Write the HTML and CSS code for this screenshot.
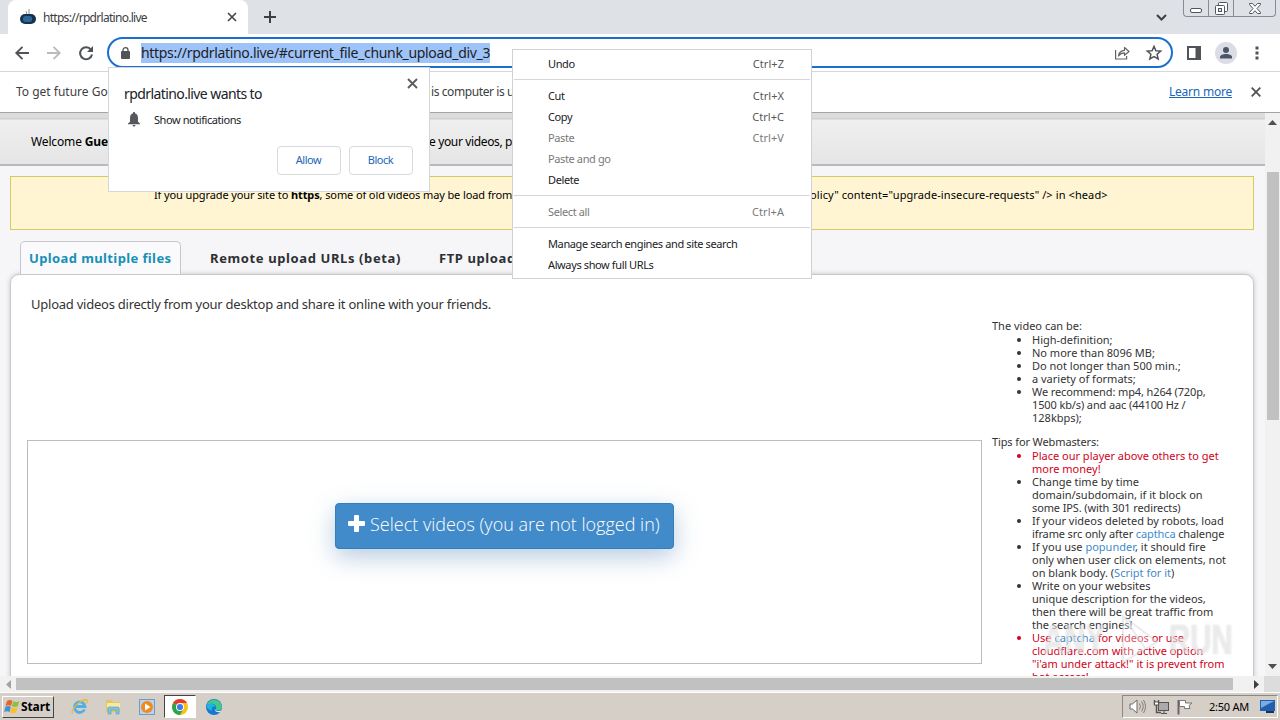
FILE: index.html
```
<!DOCTYPE html>
<html lang="en">
<head>
<meta charset="utf-8">
<title>https://rpdrlatino.live</title>
<link rel="stylesheet" href="styles.css">
</head>
<body>
<div class="tabstrip">
  <div class="tab">
    <svg class="favicon" width="18" height="18" viewBox="0 0 18 18"><path d="M8 7 7 3M10 7V1" stroke="#8a9096" fill="none"/><rect x="1" y="6" width="16" height="10" rx="5" fill="#17324e"/><rect x="4" y="8" width="9" height="6" rx="2.5" fill="#2d6796"/></svg>
    <span class="tab-title">https://rpdrlatino.live</span>
    <svg class="tab-close" width="10" height="10" viewBox="0 0 10 10"><path d="M1 1l8 8M9 1 1 9" stroke="#45494d" stroke-width="1.7"/></svg>
  </div>
  <svg class="newtab" width="12" height="12" viewBox="0 0 12 12"><path d="M6 0v12M0 6h12" stroke="#3c4043" stroke-width="2"/></svg>
  <svg class="chevron" width="11" height="7" viewBox="0 0 11 7"><path d="M1 1l4.500 4.500L10 1" fill="none" stroke="#3c4043" stroke-width="2"/></svg>
  <div class="winctl">
    <span class="wc wc-min"><svg width="12" height="5" viewBox="0 0 12 5"><rect x=".5" y=".5" width="11" height="4" rx="1.500" fill="#fff" stroke="#53565c"/></svg></span>
    <span class="wc wc-max"><svg width="13" height="13" viewBox="0 0 13 13"><rect x="3.500" y=".5" width="9" height="9" rx="1" fill="#fff" stroke="#53565c"/><rect x=".5" y="3.500" width="9" height="9" rx="1" fill="#fff" stroke="#53565c"/><rect x="3.500" y="6.500" width="3" height="3" fill="#dee1e6" stroke="#53565c"/></svg></span>
    <span class="wc wc-close"><svg width="12" height="11" viewBox="0 0 12 11"><path d="M.5.5h3L6 3.300 8.500.5h3v1L8 5.500l3.500 4v1h-3L6 7.700 3.500 10.500h-3v-1L4 5.500.5 1.500z" fill="#fff" stroke="#53565c"/></svg></span>
  </div>
</div>
<div class="toolbar">
  <svg width="14" height="14" viewBox="0 0 14 14"><path d="M14 7H1.500M7.500.8 1.300 7l6.200 6.200" fill="none" stroke="#505357" stroke-width="1.900"/></svg>
  <svg width="14" height="14" viewBox="0 0 14 14"><path d="M0 7h12.500M6.500.8 12.700 7l-6.200 6.200" fill="none" stroke="#babcbe" stroke-width="1.900"/></svg>
  <svg width="14" height="14" viewBox="0 0 14 14"><path d="M12 3.800A6 6 0 1 0 13 8.500" fill="none" stroke="#505357" stroke-width="2"/><path d="M14 0v6H8z" fill="#505357"/></svg>
  <div class="omnibox">
    <svg class="lock" width="9" height="12" viewBox="0 0 9 12"><rect y="4" width="9" height="8" rx="1" fill="#505357"/><path d="M2 5V3a2.500 2.300 0 0 1 5 0v2" fill="none" stroke="#505357" stroke-width="1.300"/></svg>
    <span class="url">https://rpdrlatino.live/#current_file_chunk_upload_div_3</span>
    <svg class="share" width="15" height="14" viewBox="0 0 15 14"><path d="M.6 4v9h11V10" fill="none" stroke="#606468" stroke-width="1.200"/><path d="M3.500 10C4 6 6 4.500 9.500 4.300V1.500L14 5.500 9.500 9.300V6.800C7 6.800 5 7.800 3.500 10z" fill="none" stroke="#606468" stroke-width="1.200" stroke-linejoin="round"/></svg>
    <svg class="star" width="16" height="15" viewBox="0 0 16 15"><path d="M8 1.300l1.900 4.400 4.800.4-3.600 3.200 1.100 4.700L8 11.500 3.800 14l1.100-4.700L1.300 6.100l4.800-.4z" fill="none" stroke="#505357" stroke-width="1.500"/></svg>
  </div>
  <svg class="side" width="14" height="14" viewBox="0 0 14 14"><path d="M0 0h14v14H0zM2 2v10h6.500V2z" fill="#505357" fill-rule="evenodd"/></svg>
  <svg class="avatar" width="22" height="22" viewBox="0 0 22 22"><circle cx="11" cy="11" r="11" fill="#dadde3"/><circle cx="11" cy="8" r="3" fill="#4b546b"/><path d="M5 16.500v-1.500c0-2 3-3 6-3s6 1 6 3v1.500z" fill="#4b546b"/></svg>
  <svg class="dots" width="4" height="14" viewBox="0 0 4 14"><path d="M.5.500h3v3h-3zM.500 5.500h3v3h-3zM.5 10.500h3v3h-3z" fill="#505357"/></svg>
</div>
<div class="infobar">
  <span class="info-a">To get future Go</span>
  <span class="info-b">is computer is u</span>
  <a class="learn">Learn more</a>
  <svg class="info-x" width="10" height="10" viewBox="0 0 10 10"><path d="M.7.7l8.600 8.600M9.300.7.7 9.300" stroke="#505357" stroke-width="1.800"/></svg>
</div>
<div class="viewport">
  <div class="page">
    <div class="welcome"><span class="wel-a">Welcome <b>Gue</b></span><span class="wel-b">e your videos, p</span></div>
    <div class="notice"><span class="not-a">If you upgrade your site to <b>https</b>, some of old videos may be load from</span><span class="not-b">olicy" content="upgrade-insecure-requests" /&gt; in &lt;head&gt;</span></div>
    <div class="tabs">
      <span class="ptab active">Upload multiple files</span>
      <span class="ptab">Remote upload URLs (beta)</span>
      <span class="ptab">FTP upload</span>
    </div>
    <div class="panel">
      <div class="main-col">
        <p class="lead">Upload videos directly from your desktop and share it online with your friends.</p>
        <div class="dropzone">
          <div class="select-btn"><svg width="17" height="17" viewBox="0 0 17 17"><path d="M6 1q0-1 1-1h3q1 0 1 1v5h5q1 0 1 1v3q0 1-1 1h-5v5q0 1-1 1H7q-1 0-1-1v-5H1q-1 0-1-1V7q0-1 1-1h5z" fill="#fff"/></svg><span>Select videos (you are not logged in)</span></div>
        </div>
      </div>
      <div class="tips">
        <h4>The video can be:</h4>
        <ul>
          <li>High-definition;</li>
          <li>No more than 8096 MB;</li>
          <li>Do not longer than 500 min.;</li>
          <li>a variety of formats;</li>
          <li><span class="snug">We recommend: mp4, h264 (720p,</span><br><span class="snug">1500 kb/s) and aac (44100 Hz /</span><br>128kbps);</li>
        </ul>
        <h4 class="snug">Tips for Webmasters:</h4>
        <ul>
          <li class="red">Place our player above others to get<br>more money!</li>
          <li>Change time by time<br>domain/subdomain, if it block on<br><span class="snug">some IPS. (with 301 redirects)</span></li>
          <li>If your videos deleted by robots, load<br><span class="snug">iframe src only after <a>capthca</a> chalenge</span></li>
          <li>If you use <a>popunder</a>, it should fire<br>only when user click on elements, not<br>on blank body. (<a>Script for it</a>)</li>
          <li>Write on your websites<br>unique description for the videos,<br>then there will be great traffic from<br>the search engines!</li>
          <li class="red">Use <a>captcha</a> for videos or use<br>cloudflare.com with active option<br>"i'am under attack!" it is prevent from<br>bot access!</li>
        </ul>
      </div>
    </div>
  </div>
  <div class="vscroll"><svg class="up" width="9" height="5" viewBox="0 0 9 5"><path d="M0 5 4.500 0 9 5z" fill="#505050"/></svg><div class="vthumb"></div><svg class="down" width="9" height="5" viewBox="0 0 9 5"><path d="M0 0l4.500 5L9 0z" fill="#505050"/></svg></div>
</div>
<div class="hscroll"><svg width="5" height="9" viewBox="0 0 5 9"><path d="M5 0 0 4.500 5 9z" fill="#a3a3a3"/></svg><div class="hthumb"></div><svg class="right" width="5" height="9" viewBox="0 0 5 9"><path d="M0 0l5 4.500L0 9z" fill="#404040"/></svg><div class="corner"></div></div>
<div class="taskbar">
  <div class="start"><svg width="15" height="15" viewBox="0 0 15 15"><path d="M2 2q3-2 5.500 0L6 7Q3.500 5.500.5 7z" fill="#e8642c"/><path d="M8.300 2.300q3 1.500 6 0L12.800 7.300q-3 1.500-6 0z" fill="#8cc043"/><path d="M.3 8q3-1.800 5.500 0L4.500 13Q2 11.500-.8 13z" fill="#3f8fdb"/><path d="M6.600 8.300q3 1.500 6 0L11 13.500q-3 1.500-6 0z" fill="#fbc02d"/></svg><span>Start</span></div>
  <div class="ql ql-ie"><svg width="17" height="17" viewBox="0 0 17 17"><path d="M13.500 11.500A5.300 5.300 0 1 1 14 8.500H4.500" fill="none" stroke="#4db1e8" stroke-width="2.800"/><path d="M1.500 15.500C-1 12 9 2 15.500 1.500c1.500.5.500 3-.5 4" fill="none" stroke="#e9b83a" stroke-width="1.300"/></svg></div>
  <div class="ql ql-ex"><svg width="17" height="16" viewBox="0 0 17 16"><path d="M1 1h6l1 2h7v10H1z" fill="#e3c565"/><path d="M2 4h13v5H2z" fill="#f7eaa6"/><path d="M3 15V9q0-1 1-1h9q1 0 1 1v6h-3v-4H6v4z" fill="#7fc4dd" stroke="#4e9fc0" stroke-width=".6"/></svg></div>
  <div class="ql ql-mp"><svg width="16" height="16" viewBox="0 0 16 16"><rect x=".5" y=".5" width="15" height="15" fill="#b9d3ee" stroke="#6d9cc9"/><circle cx="8" cy="8" r="6" fill="#f08a1d"/><path d="M6 4.500v7L11.500 8z" fill="#fff"/></svg></div>
  <div class="ql ql-cr"><svg width="16" height="16" viewBox="0 0 16 16"><circle cx="8" cy="8" r="8" fill="#fbc116"/><path d="M8 8 1.100 4A8 8 0 0 1 14.900 4z" fill="#e33b2e"/><path d="M8 8 1.100 4A8 8 0 0 0 8 16l3.500-6z" fill="#2da44e"/><path d="M8 4h6.900L11.500 10z" fill="#fbc116"/><circle cx="8" cy="8" r="4" fill="#fff"/><circle cx="8" cy="8" r="3.100" fill="#3b7de9"/></svg></div>
  <div class="ql ql-ed"><svg width="16" height="16" viewBox="0 0 16 16"><circle cx="8" cy="8" r="8" fill="#1478cf"/><path d="M.5 6A8 8 0 0 1 16 8c0 2.500-2 3.500-4 3.500s-3-.7-2-2C11 6 7 3 .5 6z" fill="#43c989"/><path d="M.3 7C3 3.500 9 4.500 9.500 8 7 6.500 5 9 6 12c-3-1-5-3-5.700-5z" fill="#1db4dd"/><path d="M9.500 8c-1.500 2 0 4 3 4 1.500 0 2.500-.5 3-1-.3.800-.7 1.300-1.200 1.900C10 14 7.500 11 9.500 8z" fill="#e6f1f5"/></svg></div>
  <div class="tray">
    <svg class="spk" width="17" height="15" viewBox="0 0 17 15"><path d="M1 5h2.500L8 1v13L3.500 10H1z" fill="#fff" stroke="#6b6b6b"/><path d="M10.500 4.500q2 3 0 6M12.500 2.500q3.500 5 0 10M14.500 1q4 6.500 0 13" fill="none" stroke="#7c7c7c"/></svg>
    <svg class="net" width="16" height="16" viewBox="0 0 16 16"><rect x="5.500" y="3.500" width="10" height="8" fill="#aaa" stroke="#555"/><path d="M8 14.500h6M11 12v2" stroke="#555"/><path d="M1.500 1v4h4V1M3.500 5v8.500H8" fill="none" stroke="#555" stroke-width="1.500"/><rect x="1.500" y="3" width="4" height="3" fill="#fff" stroke="#555"/></svg>
    <svg class="flag" width="16" height="16" viewBox="0 0 16 16"><path d="M1.500 1v14.500" stroke="#666" stroke-width="2"/><path d="M2.500 1.500h6V4H15l-3 2.500 1 3H7.500v-2h-5z" fill="#fff" stroke="#777"/></svg>
    <span class="clock">2:50 AM</span>
    <svg class="desk" width="15" height="13" viewBox="0 0 15 13"><path d="M0 0h15v11H0z" fill="#245fae"/><path d="M1 1h13L1 8z" fill="#77aee8"/><path d="M6 11h8v2H6z" fill="#16335c"/></svg>
  </div>
</div>

<div class="watermark"><span>ANY</span><svg width="48" height="56" viewBox="0 0 48 56"><path d="M8 4v46l34-20zM8 4l22 32" fill="#fff" fill-opacity=".3" stroke="#c9cdd0" stroke-opacity=".4" stroke-width="2"/></svg><span>RUN</span></div>

<div class="permission">
  <svg class="perm-x" width="11" height="11" viewBox="0 0 11 11"><path d="M1 1l9 9M10 1l-9 9" stroke="#5a5d61" stroke-width="1.900"/></svg>
  <div class="perm-title">rpdrlatino.live wants to</div>
  <div class="perm-row"><svg width="12" height="15" viewBox="0 0 12 15"><path d="M6 0q1.200 0 1.200 1.400Q10 2.200 10 6v3.800l2 1.700v.8H0v-.8l2-1.700V6q0-3.800 2.800-4.600Q4.800 0 6 0zM4.500 13h3Q7.300 14.500 6 14.500T4.500 13z" fill="#55585c"/></svg><span>Show notifications</span></div>
  <div class="perm-btns"><span class="pbtn">Allow</span><span class="pbtn">Block</span></div>
</div>

<div class="menu">
  <div class="item"><span>Undo</span><kbd>Ctrl+Z</kbd></div>
  <hr>
  <div class="item"><span>Cut</span><kbd>Ctrl+X</kbd></div>
  <div class="item"><span>Copy</span><kbd>Ctrl+C</kbd></div>
  <div class="item off"><span>Paste</span><kbd>Ctrl+V</kbd></div>
  <div class="item off"><span>Paste and go</span></div>
  <div class="item"><span>Delete</span></div>
  <hr>
  <div class="item off"><span>Select all</span><kbd>Ctrl+A</kbd></div>
  <hr>
  <div class="item"><span>Manage search engines and site search</span></div>
  <div class="item"><span>Always show full URLs</span></div>
</div>
</body>
</html>
```
FILE: styles.css
```
* { box-sizing: border-box; }
body { margin: 0; width: 1280px; height: 720px; overflow: hidden; position: relative; display: flex; flex-direction: column; font-family: "Noto Sans", sans-serif; font-size: 11px; color: #202124; background: #fff; }
svg { display: block; flex: none; overflow: visible; }
span, a, b, kbd { white-space: nowrap; }
.tabstrip { height: 34px; background: #dee1e6; display: flex; align-items: flex-start; padding-left: 8px; flex: none; }
.tab { width: 240px; height: 34px; background: #fff; border-radius: 8px 8px 0 0; display: flex; align-items: center; padding: 0 11px; }
.tab-title { font-size: 12px; letter-spacing: -.71px; margin-left: 6px; flex: 1; color: #3c4043; }
.newtab { margin: 11px 0 0 16px; }
.chevron { margin: 14px 0 0 auto; }
.winctl { display: flex; margin: 0 4px 0 16px; height: 17px; width: 93px; border: 1px solid #898c92; border-top: 0; border-radius: 0 0 4px 4px; }
.wc { display: flex; justify-content: center; align-items: flex-start; border-right: 1px solid #898c92; }
.wc-min { width: 25px; padding-top: 8px; }
.wc-max { width: 25px; padding-top: 2px; }
.wc-close { flex: 1; padding-top: 3px; border: 0; }
.toolbar { height: 38px; border-bottom: 1px solid #d5d7da; display: flex; align-items: center; padding: 0 20px 0 15px; gap: 18px; flex: none; }
.omnibox { width: 1066px; height: 31px; flex: none; margin-left: -4px; border: 2px solid #1a6fd0; border-radius: 16px; display: flex; align-items: center; padding: 0 9px 0 12px; }
.url { margin-left: 11px; background: #9ec3f8; font-size: 14px; letter-spacing: -.32px; line-height: 20px; height: 20px; width: 349px; }
.share { margin-left: auto; margin-right: 16px; }
.side { margin-left: -4px; }
.avatar { margin-left: -4px; }
.infobar { height: 41px; flex: none; display: flex; align-items: center; padding: 0 0 2px 16px; font-size: 12px; color: #3c4043; border-bottom: 1px solid #a4a4a4; }
.info-a { width: 415px; }
.info-b { width: 738px; letter-spacing: -.41px; }
.learn { color: #1a66b8; text-decoration: underline; width: 82px; letter-spacing: -.23px; }
.info-x { margin-top: 1px; }
.viewport { height: 563px; flex: none; display: flex; background: #f6f6f9; }
.page { width: 1265px; height: 563px; overflow: hidden; }
.welcome { height: 53px; border-bottom: 2px solid #b9b9b9; background: linear-gradient(#dcdcdc 0 5px, #cfcfcf 5px 6px, #efefef 7px, #e5e5e5); display: flex; padding: 20px 0 0 31px; font-size: 12px; line-height: 17px; color: #000; }
.wel-a { width: 398px; letter-spacing: -.14px; }
.wel-b { letter-spacing: -.36px; }
.notice { margin: 10px 11px 0 10px; height: 54px; background: #fff5d2; border: 1px solid #d3cb62; padding: 10px 0 0 143px; display: flex; line-height: 15px; color: #000; }
.not-a { width: 656px; letter-spacing: -.11px; }
.not-b { letter-spacing: .1px; }
.tabs { display: flex; height: 44px; padding: 11px 0 0 20px; font-size: 13px; font-weight: bold; color: #2e3033; letter-spacing: .61px; }
.ptab { height: 33px; line-height: 32px; padding: 0 8px; margin-right: 20px; border: 1px solid transparent; }
.ptab.active { width: 161px; letter-spacing: .39px; color: #1690b4; border-color: #c6c6cc; border-bottom: 0; border-radius: 5px 5px 0 0; background: #fafafc; }
.panel { margin: 0 11px 0 10px; height: 420px; background: #fff; border: 1px solid #c9c9c9; border-radius: 9px 9px 0 0; box-shadow: 0 0 5px rgba(0,0,0,.2); display: flex; padding-left: 16px; color: #333; }
.main-col { width: 955px; padding-top: 20px; }
.lead { margin: 0 0 0 4px; font-size: 13px; letter-spacing: -.24px; line-height: 18px; height: 145px; }
.dropzone { height: 224px; border: 1px solid #bcbcbc; padding: 62px 0 0 307px; }
.select-btn { width: 339px; height: 46px; border-radius: 4px; background: #428bca; border: 1px solid #357ebd; box-shadow: 0 8px 25px rgba(50,110,170,.35); color: #fff; font-family: "Open Sans", sans-serif; font-weight: 300; font-size: 18px; line-height: 40px; display: flex; padding-left: 12px; gap: 5px; }
.select-btn svg { margin-top: 11px; }
.tips { padding: 44px 0 0 10px; line-height: 13px; }
.tips h4 { font-weight: normal; font-size: 11px; margin: 0; height: 14px; line-height: 14px; }
.tips ul { margin: 0 0 11px; padding-left: 40px; white-space: nowrap; }
.tips a { color: #428bca; }
.tips .snug { letter-spacing: -.12px; }
.red { color: #d0021b; }
.vscroll { width: 15px; background: #f1f1f1; display: flex; flex-direction: column; align-items: center; padding: 7px 0; }
.vthumb { width: 12px; height: 248px; background: #c1c1c1; margin-top: 47px; }
.down { margin-top: auto; }
.hscroll { height: 16px; flex: none; background: #f1f1f1; display: flex; align-items: center; padding-left: 6px; }
.hthumb { width: 1217px; height: 12px; background: #c1c1c1; margin-left: 5px; }
.right { margin-left: 21px; }
.corner { width: 16px; height: 16px; background: #dcdcdc; margin-left: auto; }
.taskbar { height: 28px; flex: none; background: #d6cfc7; border-top: 1px solid #fff; display: flex; align-items: center; padding-left: 2px; }
.start { width: 52px; height: 22px; border: 1px solid; border-color: #fff #444 #444 #fff; display: flex; align-items: center; gap: 1px; padding-left: 2px; font-weight: bold; font-size: 12px; letter-spacing: -.12px; color: #000; }
.ql { height: 23px; width: 34px; display: flex; align-items: center; justify-content: center; }
.ql-ie { margin-left: 8px; }
.ql-cr { width: 32px; background: #fff; border: 1px solid; border-color: #444 #fff #fff #444; }
.ql-ed { width: 36px; }
.tray { margin-left: auto; margin-right: 2px; width: 156px; height: 23px; border: 1px solid; border-color: #888 #fff #fff #888; display: flex; align-items: center; padding-left: 6px; color: #000; }
.net { margin-left: 7px; }
.flag { margin-left: 8px; }
.clock { margin-left: 16px; width: 51px; letter-spacing: -.24px; }
.watermark { position: absolute; left: 1043px; top: 612px; width: 192px; display: flex; justify-content: space-between; align-items: center; font: bold 42px/56px "Liberation Sans", sans-serif; color: rgba(255,255,255,.5); text-shadow: 0 0 2px rgba(120,120,120,.3); }
.watermark span { width: 66px; transform: scaleX(.7); transform-origin: left; }
.permission { position: absolute; left: 108px; top: 67px; width: 322px; height: 125px; background: #fff; border: 1px solid #d4d6d9; padding: 16px 16px 0 15px; }
.perm-x { position: absolute; right: 11px; top: 10px; }
.perm-title { font-size: 14px; line-height: 20px; letter-spacing: -.59px; }
.perm-row { display: flex; align-items: center; gap: 14px; margin-top: 8px; padding-left: 4px; line-height: 15px; letter-spacing: -.43px; }
.perm-btns { display: flex; justify-content: flex-end; gap: 8px; margin-top: 19px; }
.pbtn { width: 64px; height: 29px; border: 1px solid #d8dadd; border-radius: 4px; text-align: center; line-height: 26px; letter-spacing: -.5px; padding-right: 1px; color: #1a66b8; }
.menu { position: absolute; left: 512px; top: 49px; width: 300px; height: 230px; background: #fff; border: 1px solid #cfd1d4; padding-top: 4px; }
.item { height: 21px; line-height: 20px; display: flex; justify-content: space-between; padding: 0 27px 0 35px; letter-spacing: -.38px; }
.item kbd { font: inherit; letter-spacing: .05px; color: #55585c; }
.off, .off kbd { color: #77797c; }
.menu hr { border: 0; height: 1px; background: #d5d7da; margin: 4px 1px 6px; }
```
